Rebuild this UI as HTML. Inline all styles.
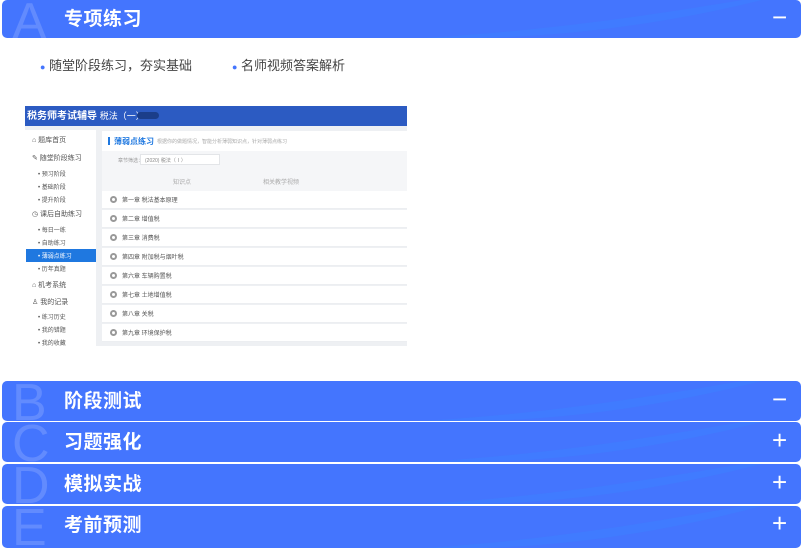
<!DOCTYPE html>
<html><head><meta charset="utf-8"><style>
*{margin:0;padding:0;box-sizing:border-box}
body{width:803px;height:546px;background:#fff;position:relative;overflow:hidden;font-family:"Liberation Sans","Noto Sans CJK SC",sans-serif}
.bar{position:absolute;left:2px;width:799px;background:#4475fe;border-radius:5px;overflow:hidden;color:#fff}
.bar .wave{position:absolute;left:0;top:0;width:100%;height:100%}
.bar .L{position:absolute;left:10px;top:-4px;font-size:52px;color:rgba(255,255,255,.16);font-family:"Liberation Sans",sans-serif;line-height:1}
.bar .t{position:absolute;left:62px;font-size:19px;font-weight:bold;letter-spacing:0.5px;line-height:1}
.bar .s{position:absolute;left:770px;font-size:26px;font-weight:300;line-height:1}
.a{position:absolute;font-size:7px;white-space:nowrap;color:#555}
.sb{position:absolute;left:25px;width:71px;background:#fff}
.row{position:absolute;left:102px;width:305px;height:18px;background:#fff;border-bottom:1px solid #eceef1}
.row span{position:absolute;left:8px;top:5px;width:7px;height:7px;border-radius:50%;border:2px solid #999;background:#fff}
.row b{position:absolute;left:20px;top:4px;font-size:6px;font-weight:normal;color:#555;white-space:nowrap}
</style></head><body>

<div class="bar" style="top:0;height:38px">
<svg class="wave" viewBox="0 0 799 38" preserveAspectRatio="none"><path d="M420 38 C560 30 680 10 740 0 L760 0 C700 15 600 35 480 38Z" fill="#3f7dff" opacity=".7"/></svg>
<div class="L">A</div><div class="t" style="top:10px">专项练习</div><div class="s" style="top:4px">−</div></div>

<div style="position:absolute;left:40px;top:55px;font-size:13px;color:#444"><span style="color:#4475fe;font-size:9px">●</span> 随堂阶段练习，夯实基础</div>
<div style="position:absolute;left:232px;top:55px;font-size:13px;color:#444"><span style="color:#4475fe;font-size:9px">●</span> 名师视频答案解析</div>

<div style="position:absolute;left:25px;top:106px;width:382px;height:240px;background:#eef0f3;overflow:hidden">
<div style="position:absolute;left:0;top:0;width:382px;height:20px;background:#2c5bc2"></div>
<div style="position:absolute;left:2px;top:4px;font-size:10px;font-weight:bold;color:#fff;white-space:nowrap;line-height:12px">税务师考试辅导 <span style="font-weight:normal;font-size:9px">税法（一）</span></div>
<div style="position:absolute;left:112px;top:6px;width:22px;height:7px;border-radius:4px;background:#1b3e8a"></div>
</div>
<div class="sb" style="top:130px;height:216px"></div>
<div class="a" style="left:32px;top:135px">⌂ 题库首页</div>
<div class="a" style="left:32px;top:153px">✎ 随堂阶段练习</div>
<div class="a" style="left:38px;top:169px;font-size:6px">• 预习阶段</div>
<div class="a" style="left:38px;top:182px;font-size:6px">• 基础阶段</div>
<div class="a" style="left:38px;top:195px;font-size:6px">• 提升阶段</div>
<div class="a" style="left:32px;top:209px">◷ 课后自助练习</div>
<div class="a" style="left:38px;top:225px;font-size:6px">• 每日一练</div>
<div class="a" style="left:38px;top:238px;font-size:6px">• 自助练习</div>
<div style="position:absolute;left:26px;top:249px;width:70px;height:13px;background:#1f78e0"></div>
<div class="a" style="left:38px;top:251px;font-size:6px;color:#fff">• 薄弱点练习</div>
<div class="a" style="left:38px;top:264px;font-size:6px">• 历年真题</div>
<div class="a" style="left:32px;top:280px">⌂ 机考系统</div>
<div class="a" style="left:32px;top:297px">♙ 我的记录</div>
<div class="a" style="left:38px;top:312px;font-size:6px">• 练习历史</div>
<div class="a" style="left:38px;top:325px;font-size:6px">• 我的错题</div>
<div class="a" style="left:38px;top:338px;font-size:6px">• 我的收藏</div>

<div style="position:absolute;left:102px;top:131px;width:305px;height:20px;background:#fff"></div>
<div style="position:absolute;left:108px;top:137px;width:2px;height:8px;background:#1f78e0"></div>
<div class="a" style="left:114px;top:136px;font-size:8px;font-weight:bold;color:#1f78e0">薄弱点练习</div>
<div class="a" style="left:157px;top:138px;font-size:5px;color:#aaa">根据你的做题情况，智能分析薄弱知识点，针对薄弱点练习</div>
<div style="position:absolute;left:102px;top:151px;width:305px;height:40px;background:#f5f6f8"></div>
<div class="a" style="left:118px;top:157px;font-size:5px;color:#999">章节筛选：</div>
<div style="position:absolute;left:140px;top:154px;width:80px;height:11px;background:#fff;border:1px solid #e3e5e8"></div>
<div class="a" style="left:145px;top:157px;font-size:5px;color:#888">(2020) 税法（Ⅰ）</div>
<div class="a" style="left:173px;top:177px;font-size:6px;color:#aaa">知识点</div>
<div class="a" style="left:263px;top:177px;font-size:6px;color:#aaa">相关教学视频</div>

<div class="row" style="top:191px"><span></span><b>第一章 税法基本原理</b></div>
<div class="row" style="top:210px"><span></span><b>第二章 增值税</b></div>
<div class="row" style="top:229px"><span></span><b>第三章 消费税</b></div>
<div class="row" style="top:248px"><span></span><b>第四章 附加税与烟叶税</b></div>
<div class="row" style="top:267px"><span></span><b>第六章 车辆购置税</b></div>
<div class="row" style="top:286px"><span></span><b>第七章 土地增值税</b></div>
<div class="row" style="top:305px"><span></span><b>第八章 关税</b></div>
<div class="row" style="top:324px"><span></span><b>第九章 环境保护税</b></div>

<div class="bar" style="top:381px;height:40px">
<svg class="wave" viewBox="0 0 799 40" preserveAspectRatio="none"><path d="M420 40 C560 32 680 10 740 0 L760 0 C700 15 600 37 480 40Z" fill="#3f7dff" opacity=".7"/></svg>
<div class="L">B</div><div class="t" style="top:11px">阶段测试</div><div class="s" style="top:5px">−</div></div>
<div class="bar" style="top:422px;height:40px">
<svg class="wave" viewBox="0 0 799 40" preserveAspectRatio="none"><path d="M420 40 C560 32 680 10 740 0 L760 0 C700 15 600 37 480 40Z" fill="#3f7dff" opacity=".7"/></svg>
<div class="L">C</div><div class="t" style="top:11px">习题强化</div><div class="s" style="top:5px">+</div></div>
<div class="bar" style="top:464px;height:40px">
<svg class="wave" viewBox="0 0 799 40" preserveAspectRatio="none"><path d="M420 40 C560 32 680 10 740 0 L760 0 C700 15 600 37 480 40Z" fill="#3f7dff" opacity=".7"/></svg>
<div class="L">D</div><div class="t" style="top:11px">模拟实战</div><div class="s" style="top:5px">+</div></div>
<div class="bar" style="top:506px;height:42px">
<svg class="wave" viewBox="0 0 799 40" preserveAspectRatio="none"><path d="M420 40 C560 32 680 10 740 0 L760 0 C700 15 600 37 480 40Z" fill="#3f7dff" opacity=".7"/></svg>
<div class="L">E</div><div class="t" style="top:10px">考前预测</div><div class="s" style="top:4px">+</div></div>
</body></html>
